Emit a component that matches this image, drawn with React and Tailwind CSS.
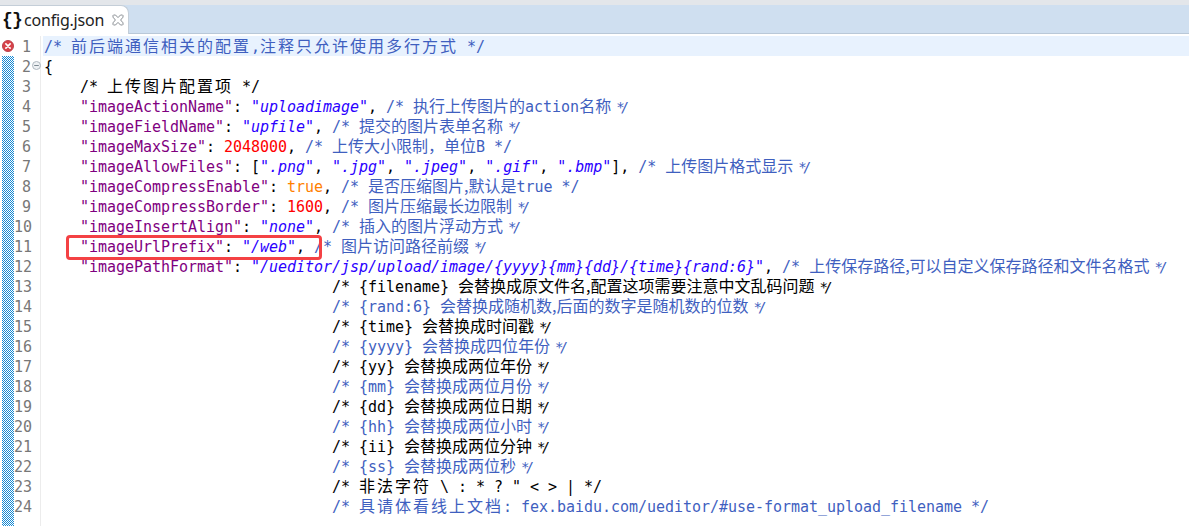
const MONO = "font-['DejaVu_Sans_Mono','Noto_Sans_CJK_SC',monospace] tracking-[-0.03px]";
const CJK_WIDE = "font-['Noto_Sans_CJK_SC',sans-serif] text-[16px] tracking-[2px] leading-none";
const CJK_NARROW = "font-['Noto_Sans_CJK_SC',sans-serif] text-[16px] tracking-[0px] leading-none";

const K = (t) => ["text-[#7f007f]", t];
const S = (t) => ["text-[#2a00ff] italic", t];
const P = (t) => ["text-[#000000]", t];
const N = (t) => ["text-[#ff0000]", t];
const T = (t) => ["text-[#ff8000]", t];

const BLUE = "text-[#3f5fbf]";
const BLACK = "text-[#000000]";

function Comment({ text, color, wide, small }) {
  const body = small ? text.replace(/ \*\/$/, "") : text;
  const parts = body.split(wide ? /([\u4e00-\u9fff]+)/ : /([\u4e00-\u9fff，,]+)/);
  return (
    <span className={color}>
      {parts.map((p, i) =>
        i % 2 ? (
          <span key={i} className={wide ? CJK_WIDE : CJK_NARROW}>{p}</span>
        ) : (
          <span key={i}>{p}</span>
        )
      )}
      {small && <span className="ml-[5px] text-[14px] leading-none tracking-[-4px]">*/</span>}
    </span>
  );
}

const lines = [
  { indent: "", comment: "/* 前后端通信相关的配置,注释只允许使用多行方式 */", color: BLUE, wide: true, highlight: true },
  { indent: "", toks: [P("{")], fold: true },
  { indent: "    ", comment: "/* 上传图片配置项 */", color: BLACK, wide: true },
  { indent: "    ", toks: [K('"imageActionName"'), P(": "), S('"uploadimage"'), P(", ")], comment: "/* 执行上传图片的action名称 */", color: BLUE, small: true },
  { indent: "    ", toks: [K('"imageFieldName"'), P(": "), S('"upfile"'), P(", ")], comment: "/* 提交的图片表单名称 */", color: BLUE, small: true },
  { indent: "    ", toks: [K('"imageMaxSize"'), P(": "), N("2048000"), P(", ")], comment: "/* 上传大小限制，单位B */", color: BLUE },
  { indent: "    ", toks: [K('"imageAllowFiles"'), P(": ["), S('".png"'), P(", "), S('".jpg"'), P(", "), S('".jpeg"'), P(", "), S('".gif"'), P(", "), S('".bmp"'), P("], ")], comment: "/* 上传图片格式显示 */", color: BLUE, small: true },
  { indent: "    ", toks: [K('"imageCompressEnable"'), P(": "), T("true"), P(", ")], comment: "/* 是否压缩图片,默认是true */", color: BLUE },
  { indent: "    ", toks: [K('"imageCompressBorder"'), P(": "), N("1600"), P(", ")], comment: "/* 图片压缩最长边限制 */", color: BLUE, small: true },
  { indent: "    ", toks: [K('"imageInsertAlign"'), P(": "), S('"none"'), P(", ")], comment: "/* 插入的图片浮动方式 */", color: BLUE, small: true },
  { indent: "    ", toks: [K('"imageUrlPrefix"'), P(": "), S('"/web"'), P(", ")], comment: "/* 图片访问路径前缀 */", color: BLUE, small: true },
  { indent: "    ", toks: [K('"imagePathFormat"'), P(": "), S('"/ueditor/jsp/upload/image/{yyyy}{mm}{dd}/{time}{rand:6}"'), P(", ")], comment: "/* 上传保存路径,可以自定义保存路径和文件名格式 */", color: BLUE, small: true },
];

const deep = [
  ["/* {filename} 会替换成原文件名,配置这项需要注意中文乱码问题 */", BLACK, true],
  ["/* {rand:6} 会替换成随机数,后面的数字是随机数的位数 */", BLUE, true],
  ["/* {time} 会替换成时间戳 */", BLACK, true],
  ["/* {yyyy} 会替换成四位年份 */", BLUE, true],
  ["/* {yy} 会替换成两位年份 */", BLACK, true],
  ["/* {mm} 会替换成两位月份 */", BLUE, true],
  ["/* {dd} 会替换成两位日期 */", BLACK, true],
  ["/* {hh} 会替换成两位小时 */", BLUE, true],
  ["/* {ii} 会替换成两位分钟 */", BLACK, true],
  ["/* {ss} 会替换成两位秒 */", BLUE, true],
  ['/* 非法字符 \\ : * ? " < > | */', BLACK, false],
  ["/* 具请体看线上文档: fex.baidu.com/ueditor/#use-format_upload_filename */", BLUE, false],
];
deep.forEach(([comment, color, small]) =>
  lines.push({ indent: " ".repeat(32), comment, color, small, wide: !small })
);

function ErrorIcon() {
  return (
    <svg width="12" height="12" viewBox="0 0 13 13" className="block">
      <circle cx="6.5" cy="6.5" r="6" fill="#d8434a" stroke="#b9404a" />
      <path d="M4.2 4.2l4.6 4.6M8.8 4.2l-4.6 4.6" stroke="#fff" strokeWidth="1.8" strokeLinecap="round" />
    </svg>
  );
}

function FoldIcon() {
  return (
    <svg width="9" height="9" viewBox="0 0 9 9" className="block">
      <circle cx="4.5" cy="4.5" r="4" fill="#eef1f3" stroke="#aeb8bf" />
      <path d="M2.2 4.5h4.6" stroke="#7d8a93" strokeWidth="1" />
    </svg>
  );
}

function CloseIcon() {
  return (
    <svg width="12" height="12" viewBox="0 0 12 12" fill="none">
      <path
        d="M1.5 1h2L6 3.6 8.5 1h2l.5.5v1.7L8.6 6 11 8.8v1.7l-.5.5h-2L6 8.4 3.5 11h-2L1 10.5V8.8L3.4 6 1 3.2V1.5z"
        fill="#fff"
        stroke="#8a8f94"
        strokeWidth="1"
      />
    </svg>
  );
}

function Checker({ id }) {
  return (
    <svg width="12" height="20" className="block" shapeRendering="crispEdges">
      <defs>
        <pattern id={id} width="2" height="2" patternUnits="userSpaceOnUse">
          <rect width="2" height="2" fill="#ffffff" />
          <rect width="1" height="1" fill="#1489d4" />
          <rect x="1" y="1" width="1" height="1" fill="#1489d4" />
        </pattern>
      </defs>
      <rect width="12" height="20" fill={`url(#${id})`} />
    </svg>
  );
}

function Row({ n, line }) {
  return (
    <div className={`flex h-5 leading-[22px] text-[15px] ${MONO}`}>
      <div className="w-[14px] pl-[2px] shrink-0">
        {n === 1 ? <div className="pt-[4px]"><ErrorIcon /></div> : <Checker id={`chk${n}`} />}
      </div>
      <div className="w-[17px] shrink-0 text-right text-[#787878] whitespace-nowrap">{n}</div>
      <div className="w-[10px] shrink-0 pl-[1px] pt-[5px] border-r border-[#ececec]">{line.fold && <FoldIcon />}</div>
      <div className="w-[2px] shrink-0" />
      <div className={`flex-1 min-w-0 pl-[1px] whitespace-pre overflow-hidden ${line.highlight ? "bg-[#e8f2fe]" : ""}`}>
        <span>{line.indent}</span>
        {line.toks && line.toks.map(([cls, t], i) => <span key={i} className={cls}>{t}</span>)}
        {line.comment && <Comment text={line.comment} color={line.color} wide={line.wide} small={line.small} />}
      </div>
    </div>
  );
}

export default function App() {
  return (
    <div className="relative w-[1189px] h-[526px] overflow-hidden bg-white">
      <div className="h-[5px] bg-[#e3e6ea]" />
      <div className="flex h-[29px] bg-[#cfdff0] border-b border-[#b9c8d8]">
        <div className="flex items-center w-[129px] h-[29px] bg-white rounded-tr-[8px] border-t border-r border-[#c4ced8]">
          <span className="ml-[2px] flex w-[20px] text-[18px] font-bold leading-none text-[#111] font-['Liberation_Mono',monospace]">
            <span className="w-[10px]">{"{"}</span>
            <span className="w-[10px]">{"}"}</span>
          </span>
          <span className="ml-[2px] text-[16px] text-[#222] tracking-[-0.2px] font-['Noto_Sans',sans-serif]">config.json</span>
          <span className="ml-[8px] flex"><CloseIcon /></span>
        </div>
      </div>
      <div className="pt-[2px]">
        {lines.map((l, i) => <Row key={i} n={i + 1} line={l} />)}
        <div className="flex h-5">
          <div className="w-[14px] pl-[2px]"><Checker id="chkend" /></div>
          <div className="w-[27px] border-r border-[#ececec]" />
        </div>
      </div>
      <div className="absolute left-[66px] top-[235px] w-[256px] h-[25px] rounded-[4px] border-[3px] border-[#f44144]" />
    </div>
  );
}
